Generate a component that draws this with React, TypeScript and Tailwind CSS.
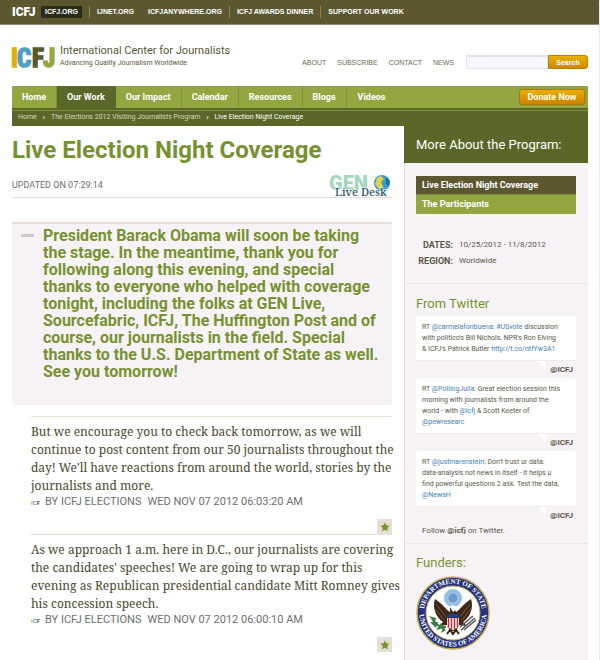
import type { ReactNode } from "react";

const topLinks = ["IJNET.ORG", "ICFJANYWHERE.ORG", "ICFJ AWARDS DINNER", "SUPPORT OUR WORK"];
const utilityLinks = ["ABOUT", "SUBSCRIBE", "CONTACT", "NEWS"];
const navLinks = ["Home", "Our Work", "Our Impact", "Calendar", "Resources", "Blogs", "Videos"];

function Mark() {
  return (
    <svg width="43" height="32" viewBox="0 -1 43 32" role="img" aria-label="ICFJ" className="shrink-0 overflow-visible font-['Liberation_Sans_Narrow','Roboto_Condensed','DejaVu_Sans_Condensed',sans-serif] text-[25px] font-bold">
      <text x="-1" y="24" fill="#e0b000" stroke="#e0b000" strokeWidth="1.500">I</text>
      <text x="5" y="24" fill="#4f9fc0" stroke="#4f9fc0" strokeWidth="1.500">C</text>
      <text x="20" y="24" fill="#5b5831" stroke="#5b5831" strokeWidth="1.500">F</text>
      <text x="31" y="24" fill="#94a642" stroke="#94a642" strokeWidth="1.500">J</text>
    </svg>
  );
}

function TopBar() {
  return (
    <div className="flex h-[25px] items-center border-b border-[#8f8d78] bg-[#5b5831] pl-3 text-[7px] leading-[12px] font-bold text-white">
      <span className="w-[23px] font-['Liberation_Sans_Narrow',Roboto,sans-serif] text-[12px] font-black">ICFJ</span>
      <a href="#" className="ml-[6px] rounded-[1px] bg-[#2b2d1b] px-1">ICFJ.ORG</a>
      <nav aria-label="Network" className="ml-[7px] flex">
        {topLinks.map((t, i) => (
          <a key={t} href="#" className={i === 1 ? "px-[7px]" : "border-l border-[#8a874f] px-[7px]"}>{t}</a>
        ))}
      </nav>
    </div>
  );
}

function Header() {
  return (
    <header className="flex h-[61px] items-start justify-between">
      <a href="#" className="mt-[17px] flex items-start">
        <Mark />
        <span className="mt-[1px] ml-[5px] font-[Roboto,sans-serif] text-[#5b5831]">
          <span className="block text-[11px] leading-[16px]">International Center for Journalists</span>
          <span className="block text-[7px] leading-[8px]">Advancing Quality Journalism Worldwide</span>
        </span>
      </a>
      <div className="mt-[30px] flex items-center">
        <nav aria-label="Utility" className="mt-[3px] mr-3 flex gap-[11px] text-[7px] text-[#6b6847]">
          {utilityLinks.map((t) => <a key={t} href="#">{t}</a>)}
        </nav>
        <form className="flex h-[14px]" onSubmit={(e) => e.preventDefault()}>
          <input aria-label="Search" className="w-[82px] border border-t-2 border-[#e2e2ea] bg-[#f7f7ff] text-[8px] outline-none" />
          <button className="w-[40px] rounded-r-[3px] border border-[#c07c00] bg-gradient-to-b from-[#e8b000] to-[#cf8a00] text-[7px] leading-[11px] font-bold text-white">Search</button>
        </form>
      </div>
    </header>
  );
}

function MainNav() {
  return (
    <div className="bg-[#5a6729]">
      <div className="flex h-[22px] bg-[#94a642] font-[Roboto,sans-serif] text-[9px] font-bold text-white">
        <nav aria-label="Main" className="flex">
          {navLinks.map((t, i) => (
            <a key={t} href="#" className={i === 1 ? "border-r border-[#5a6729] bg-[#5a6729] px-[10px] leading-[22px]" : i === 6 ? "px-[11px] leading-[22px]" : "border-r border-[#7f9138] px-[10px] leading-[22px]"}>{t}</a>
          ))}
        </nav>
        <button className="mt-[3px] mr-[3px] ml-auto h-4 w-[66px] rounded-[3px] border border-[#b87300] bg-gradient-to-b from-[#e8b000] to-[#cf8000] leading-[13px]">Donate Now</button>
      </div>
      <div className="h-[3px] border-b border-[#7f9138]" />
      <nav aria-label="Breadcrumb" className="flex h-[15px] items-center gap-[6px] px-[6px] pb-[2px] font-[Roboto,sans-serif] text-[7px] leading-[11px] text-[#d5dbb4]">
        <a href="#">Home</a><span className="font-bold text-white">›</span>
        <a href="#">The Elections 2012 Visiting Journalists Program</a><span className="font-bold text-white">›</span>
        <span className="text-white">Live Election Night Coverage</span>
      </nav>
    </div>
  );
}

function GenLogo() {
  return (
    <svg width="64" height="30" viewBox="0 -5 64 30" role="img" aria-label="GEN Live Desk" className="mr-[-1px] shrink-0 overflow-visible">
      <text x="0" y="14" fill="#a3d7bd" className="font-[Roboto,sans-serif] text-[20px] font-black">GEN</text>
      <circle cx="53" cy="7" r="8" fill="#3d9fc9" />
      <path d="M48 2 52 0 55 3 52 6 54 11 50 13 46 8Z" fill="#e3d44a" />
      <path d="M57 1 61 5 60 10 57 8Z" fill="#1f73a8" />
      <text x="6" y="20" fill="#1c5068" stroke="#fff" strokeWidth="1" paintOrder="stroke" className="font-['Noto_Serif','DejaVu_Serif',serif] text-[11px] font-medium">Live Desk</text>
    </svg>
  );
}

function Post({ children, time }: { children: ReactNode; time: string }) {
  return (
    <article className="ml-[19px] border-t border-[#e6e2d6] pt-[6px]">
      <p className="font-['Noto_Serif','Droid_Serif','Liberation_Serif',serif] text-[12px] leading-[18px] whitespace-nowrap text-[#4a482a]">{children}</p>
      <p className="flex items-center font-[Roboto,sans-serif] text-[11px] leading-[14px] text-[#6e6e6e]">
        <svg width="9" height="8" viewBox="0 0 9 8" className="mr-[5px] font-[Roboto,sans-serif] text-[6px] font-bold" aria-hidden="true">
          <text y="7"><tspan fill="#e0b000">I</tspan><tspan fill="#4f9fc0">C</tspan><tspan fill="#5b5831">F</tspan></text>
        </svg>
        <span className="mr-[6px]">BY ICFJ ELECTIONS</span><time>{time}</time>
      </p>
      <div className="mt-[10px] flex justify-end">
        <button aria-label="Highlight" className="flex h-[15px] w-[15px] items-center justify-center bg-[#e6ddd6]">
          <svg width="10" height="10" viewBox="0 0 24 24" fill="#76922f"><path d="m12 1 3.400 7 7.600 1-5.500 5.300 1.300 7.700L12 18.400 5.200 22l1.300-7.700L1 9l7.600-1Z" /></svg>
        </button>
      </div>
    </article>
  );
}

function Tweet({ children }: { children: ReactNode }) {
  return (
    <li>
      <p className="rounded-[3px] border-b border-[#eeeaee] bg-white px-[6px] pt-[6px] pb-[5px] leading-[11px]">{children}</p>
      <div className="flex h-[17px] justify-end pr-[3px]">
        <svg width="8" height="8" viewBox="0 0 8 8" className="mr-1" aria-hidden="true"><path d="M0 0H8V8Z" fill="#fff" /></svg>
        <a href="#" className="mt-[3px] text-[8px] leading-[11px] font-bold">@ICFJ</a>
      </div>
    </li>
  );
}

function Handle({ children }: { children: ReactNode }) {
  return <a href="#" className="text-[#3e7fb8]">{children}</a>;
}

function Seal() {
  return (
    <svg width="74" height="74" viewBox="0 0 74 74" role="img" aria-label="Department of State, United States of America">
      <defs>
        <path id="arcTop" d="M8.500 42A29 29 0 1 1 65.500 42" />
        <path id="arcBottom" d="M3.500 33A33.700 33.700 0 1 0 70.500 33" />
      </defs>
      <circle cx="37" cy="37" r="36" fill="#23337f" stroke="#c9ad4e" strokeWidth="1.500" />
      <circle cx="37" cy="37" r="27" fill="#fff" stroke="#c9ad4e" />
      <g fill="#fff" className="font-['Liberation_Serif',serif] text-[7px] font-bold">
        <text textAnchor="middle"><textPath href="#arcTop" startOffset="50%">DEPARTMENT OF STATE</textPath></text>
        <text textAnchor="middle"><textPath href="#arcBottom" startOffset="50%">UNITED STATES OF AMERICA</textPath></text>
      </g>
      <circle cx="37" cy="22" r="9" fill="#8fbfe6" />
      <circle cx="37" cy="22" r="5" fill="#6d9bc9" stroke="#e3eefa" strokeDasharray="1 1" />
      <path d="M34 36C30 34 28 29 19 23 16 32 20 41 27 46L23 50 31 49 34 55H40L43 49 51 50 47 46C54 41 58 32 55 23 46 29 44 34 40 36L38 31 34 31Z" fill="#3d2616" />
      <path d="m20 28 10 13M19 33l9 11M54 28 44 41M55 33l-9 11" stroke="#8b694a" strokeWidth=".7" />
      <path d="m34 31 2-2 3 1 1 4-3 2Z" fill="#fff" />
      <path d="M31 38H43V49Q42 52 37 54 32 52 31 49Z" fill="#fff" />
      <path d="M32.500 42V51M35.500 42V53M38.500 42V53M41.500 42V51" stroke="#c52d36" strokeWidth="1.500" />
      <path d="M31 38H43V42H31Z" fill="#26397f" />
      <path d="M30 51Q22 52 16 43" stroke="#3f7a3f" strokeWidth="2" fill="none" />
      <path d="m13 40 7 2-1 5ZM14 46l8 0-2 6ZM20 54l5-7 4 5ZM25 57l2-6 3 3Z" fill="#3f7a3f" />
      <path d="m45 54 14-12M44 51l13-11M48 54l12-10" stroke="#555" strokeWidth="1.600" />
      <path d="m31 58 3-4 3 4 3-4 3 4" stroke="#3d2616" strokeWidth="2" fill="none" />
    </svg>
  );
}

function Sidebar() {
  return (
    <aside className="flex w-[184px] shrink-0 flex-col font-[Roboto,sans-serif] text-[7px] text-[#5b5847]">
      <h2 className="bg-[#5a6729] px-3 pt-[10px] pb-[10px] text-[13px] leading-[17px] text-white">More About the Program:</h2>
      <div className="flex-1 border-l border-[#e6ddd6] bg-[#f6f2f6]">
        <section className="border-b border-[#e9e4e6] pt-[13px] pr-3 pb-[14px] pl-[11px]">
          <nav aria-label="Program" className="flex flex-col text-[9px] leading-[18px] font-bold text-white">
            <a href="#" className="bg-[#5b5831] px-[6px]">Live Election Night Coverage</a>
            <a href="#" className="border-t border-[#7f9138] bg-[#94a642] px-[6px] pb-[1px]">The Participants</a>
          </nav>
          <dl className="mt-[23px] grid grid-cols-[37px_1fr] gap-x-[6px] text-[8px] leading-[16px]">
            <dt className="text-right text-[9px] font-bold">DATES:</dt><dd>10/25/2012 - 11/8/2012</dd>
            <dt className="text-right text-[9px] font-bold">REGION:</dt><dd>Worldwide</dd>
          </dl>
        </section>
        <section className="border-b border-[#e9e4e6] pt-[11px] pr-3 pb-[6px] pl-[11px]">
          <h2 className="mb-[4px] text-[13px] leading-[17px] text-[#76922f]">From Twitter</h2>
          <ul>
            <Tweet>RT <Handle>@carmelafonbuena</Handle>: <Handle>#USvote</Handle> discussion<br />with politico's Bill Nichols, NPR's Ron Elving<br />&amp; ICFJ's Patrick Butler <Handle>http://t.co/ntfYw3A1</Handle></Tweet>
            <Tweet>RT <Handle>@PollingJulia</Handle>: Great election session this<br />morning with journalists from around the<br />world - with <Handle>@icfj</Handle> &amp; Scott Keeter of<br /><Handle>@pewresearc</Handle></Tweet>
            <Tweet>RT <Handle>@justinarenstein</Handle>: Don't trust ur data:<br />data-analysis not news in itself - it helps u<br />find powerful questions 2 ask. Test the data,<br /><Handle>@NewsH</Handle></Tweet>
          </ul>
          <p className="px-[6px] pt-[1px] text-[8px] leading-[12px]">Follow <a href="#" className="font-bold">@icfj</a> on Twitter.</p>
        </section>
        <section className="pt-[10px] pr-3 pl-[11px]">
          <h2 className="mb-[5px] text-[13px] leading-[17px] text-[#76922f]">Funders:</h2>
          <Seal />
        </section>
      </div>
    </aside>
  );
}

export default function App() {
  return (
    <div className="flex min-h-screen flex-col border-r border-dotted border-[#d8d8d8] bg-white font-['Liberation_Sans',Arial,sans-serif]">
      <TopBar />
      <div className="flex flex-1 flex-col pr-[11px] pl-3">
        <Header />
        <MainNav />
        <div className="flex flex-1 gap-3">
          <main className="min-w-0 flex-1">
            <h1 className="pt-[8px] font-[Roboto,sans-serif] text-[24px] leading-[32px] font-bold text-[#76922f]">Live Election Night Coverage</h1>
            <div className="mt-[8px] flex h-[24px] items-center justify-between border-b border-[#e6ddd6]">
              <p className="font-[Roboto,sans-serif] text-[9px] text-[#6e6e6e]">UPDATED ON 07:29:14</p>
              <GenLogo />
            </div>
            <section className="mt-6 flex border-t-2 border-[#e6ddd6] bg-[#f6f2f6] pt-[3px] pr-[6px] pb-[25px] pl-[9px]">
              <span className="mt-[7px] mr-[9px] h-[3px] w-[13px] shrink-0 bg-[#cbc9cc]" />
              <p className="font-[Roboto,sans-serif] text-[16px] leading-[17px] font-bold text-[#76922f]">President Barack Obama will soon be taking<br />the stage. In the meantime, thank you for following along this evening, and special thanks to everyone who helped with coverage tonight, including the folks at GEN Live, Sourcefabric, ICFJ, The Huffington Post and of course, our journalists in the field. Special thanks to the U.S. Department of State as well. See you tomorrow!</p>
            </section>
            <div className="mt-[11px]">
              <Post time="WED NOV 07 2012 06:03:20 AM">But we encourage you to check back tomorrow, as we will<br />continue to post content from our 50 journalists throughout the<br />day! We'll have reactions from around the world, stories by the<br />journalists and more.</Post>
              <Post time="WED NOV 07 2012 06:00:10 AM">As we approach 1 a.m. here in D.C., our journalists are covering<br />the candidates' speeches! We are going to wrap up for this<br />evening as Republican presidential candidate Mitt Romney gives<br />his concession speech.</Post>
            </div>
          </main>
          <Sidebar />
        </div>
      </div>
    </div>
  );
}
